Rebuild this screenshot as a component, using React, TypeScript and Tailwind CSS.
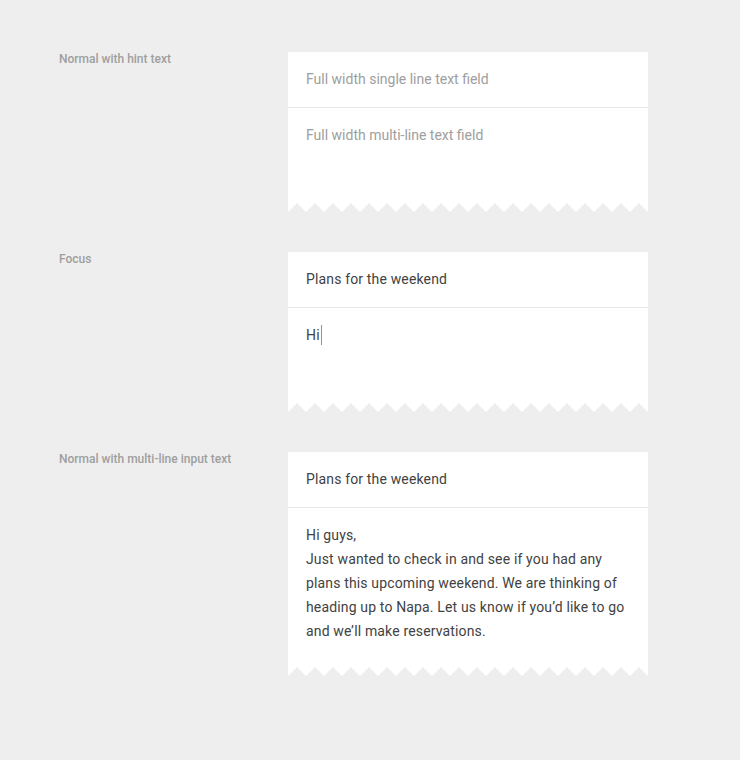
import React from 'react';

const Zigzag: React.FC = () => {
  const teeth = 20;
  const pts: string[] = ['0,0'];
  for (let i = 0; i < teeth; i++) {
    pts.push(`${i * 18},9`, `${i * 18 + 9},0`);
  }
  pts.push('360,9', '360,0');
  return (
    <svg width="360" height="9" viewBox="0 0 360 9" className="block">
      <polygon points={pts.join(' ')} fill="#ffffff" />
    </svg>
  );
};

const Field: React.FC<{
  single: string;
  singleHint?: boolean;
  children: React.ReactNode;
  minBody: string;
}> = ({ single, singleHint, children, minBody }) => (
  <div className="w-[360px]">
    <div className="bg-white">
      <div
        className={`h-[55px] px-[18px] flex items-center text-[14px] ${
          singleHint ? 'text-[#9e9e9e]' : 'text-[#424242] tracking-[0.15px]'
        }`}
      >
        {single}
      </div>
      <div className="h-px bg-[#e6e6e6]" />
      <div className={`px-[18px] pt-[15px] text-[14px] leading-[24px] ${minBody}`}>{children}</div>
    </div>
    <Zigzag />
  </div>
);

const Row: React.FC<{ label: string; children: React.ReactNode }> = ({ label, children }) => (
  <div className="flex">
    <div className="w-[229px] text-[12px] leading-[12px] pt-[1px] font-medium text-[#9e9e9e]">{label}</div>
    {children}
  </div>
);

export default function App() {
  return (
    <div
      className="min-h-[760px] bg-[#eeeeee] pl-[59px] pt-[52px] flex flex-col gap-[40px]"
      style={{ fontFamily: 'Roboto, "Noto Sans", sans-serif' }}
    >
      <Row label="Normal with hint text">
        <Field single="Full width single line text field" singleHint minBody="h-[95px]">
          <span className="text-[#9e9e9e]">Full width multi-line text field</span>
        </Field>
      </Row>
      <Row label="Focus">
        <Field single="Plans for the weekend" minBody="h-[95px]">
          <span className="text-[#424242] tracking-[0.15px]">
            Hi
            <span className="inline-block w-px h-[20px] bg-[#f06292] align-[-5px] ml-[1px]" />
          </span>
        </Field>
      </Row>
      <Row label="Normal with multi-line input text">
        <Field single="Plans for the weekend" minBody="h-[159px]">
          <p className="text-[#424242] tracking-[0.15px]">
            Hi guys,
            <br />
            Just wanted to check in and see if you had any plans this upcoming weekend. We are thinking of heading up to Napa. Let us know if you’d like to go and we’ll make reservations.
          </p>
        </Field>
      </Row>
    </div>
  );
}
